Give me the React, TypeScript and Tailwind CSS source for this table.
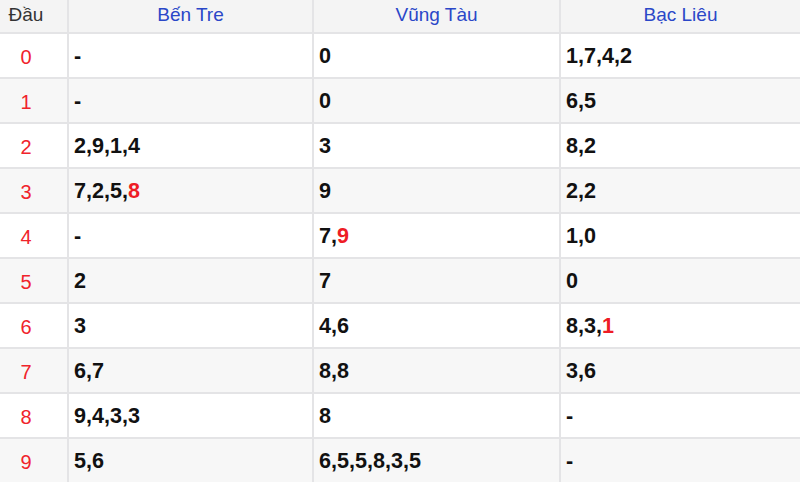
import React from "react";

type Cell = { t: string; hi?: boolean }[];

const P = (s: string, hiLast = false): Cell => {
  if (s === "-") return [{ t: "-" }];
  if (!hiLast) return [{ t: s }];
  const i = s.lastIndexOf(",");
  return [{ t: s.slice(0, i + 1) }, { t: s.slice(i + 1), hi: true }];
};

const rows: { d: string; a: Cell; b: Cell; c: Cell }[] = [
  { d: "0", a: P("-"), b: P("0"), c: P("1,7,4,2") },
  { d: "1", a: P("-"), b: P("0"), c: P("6,5") },
  { d: "2", a: P("2,9,1,4"), b: P("3"), c: P("8,2") },
  { d: "3", a: P("7,2,5,8", true), b: P("9"), c: P("2,2") },
  { d: "4", a: P("-"), b: P("7,9", true), c: P("1,0") },
  { d: "5", a: P("2"), b: P("7"), c: P("0") },
  { d: "6", a: P("3"), b: P("4,6"), c: P("8,3,1", true) },
  { d: "7", a: P("6,7"), b: P("8,8"), c: P("3,6") },
  { d: "8", a: P("9,4,3,3"), b: P("8"), c: P("-") },
  { d: "9", a: P("5,6"), b: P("6,5,5,8,3,5"), c: P("-") },
];

function Val({ cell }: { cell: Cell }) {
  return (
    <>
      {cell.map((p, i) => (
        <span key={i} className={p.hi ? "text-[#ee1c25]" : "text-[#111]"}>
          {p.t}
        </span>
      ))}
    </>
  );
}

export default function App() {
  const font = { fontFamily: '"Liberation Sans", Arial, sans-serif' };
  return (
    <div className="w-[800px] h-[482px] overflow-hidden bg-white" style={font}>
      <div className="grid grid-cols-[69px_245px_247px_239px]">
        {/* header */}
        <div className="h-[34px] bg-[#f4f4f4] border-b-2 border-r-2 border-[#e4e4e6] flex items-center justify-center pr-[15px] pb-[1px] text-[19px] text-[#333]">
          Đầu
        </div>
        <div className="h-[34px] bg-[#f4f4f4] border-b-2 border-r-2 border-[#e4e4e6] flex items-center justify-center pb-[1px] text-[19px] text-[#2a47c8]">
          Bến Tre
        </div>
        <div className="h-[34px] bg-[#f4f4f4] border-b-2 border-r-2 border-[#e4e4e6] flex items-center justify-center pb-[1px] text-[19px] text-[#2a47c8]">
          Vũng Tàu
        </div>
        <div className="h-[34px] bg-[#f4f4f4] border-b-2 border-[#e4e4e6] flex items-center justify-center pb-[1px] text-[19px] text-[#2a47c8]">
          Bạc Liêu
        </div>
        {rows.map((r, i) => {
          const bg = i % 2 === 0 ? "bg-white" : "bg-[#f7f7f7]";
          return (
            <React.Fragment key={r.d}>
              <div
                className={`${bg} h-[45px] border-b-2 border-r-2 border-[#e4e4e6] flex items-center justify-center pr-[15px] pt-[2px] text-[20px] text-[#f0232b]`}
              >
                {r.d}
              </div>
              <div
                className={`${bg} h-[45px] border-b-2 border-r-2 border-[#e4e4e6] flex items-center pl-[5px] pt-[2px] text-[21.6px] font-bold`}
              >
                <Val cell={r.a} />
              </div>
              <div
                className={`${bg} h-[45px] border-b-2 border-r-2 border-[#e4e4e6] flex items-center pl-[5px] pt-[2px] text-[21.6px] font-bold`}
              >
                <Val cell={r.b} />
              </div>
              <div
                className={`${bg} h-[45px] border-b-2 border-[#e4e4e6] flex items-center pl-[5px] pt-[2px] text-[21.6px] font-bold`}
              >
                <Val cell={r.c} />
              </div>
            </React.Fragment>
          );
        })}
      </div>
    </div>
  );
}
